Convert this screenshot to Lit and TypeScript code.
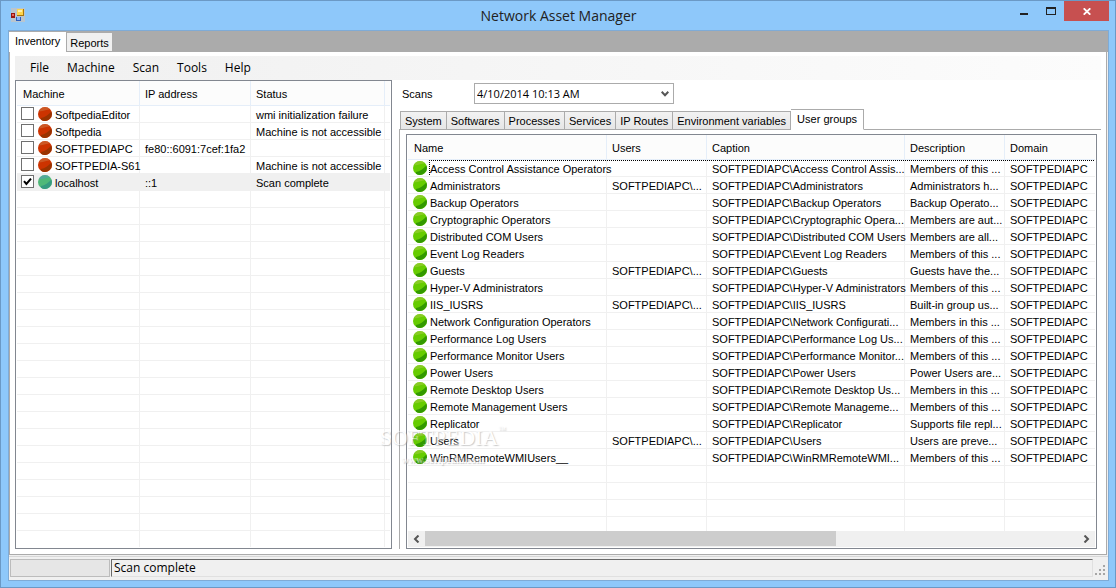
import { LitElement, html, css, svg } from "lit";
import { customElement, property } from "lit/decorators.js";
import { classMap } from "lit/directives/class-map.js";

interface Machine {
  name: string;
  ip: string;
  status: string;
  online?: boolean;
}

const MACHINES: Machine[] = [
  { name: "SoftpediaEditor", ip: "", status: "wmi initialization failure" },
  { name: "Softpedia", ip: "", status: "Machine is not accessible" },
  { name: "SOFTPEDIAPC", ip: "fe80::6091:7cef:1fa2", status: "" },
  { name: "SOFTPEDIA-S61", ip: "", status: "Machine is not accessible" },
  { name: "localhost", ip: "::1", status: "Scan complete", online: true },
];

const GROUPS: string[][] = [
  ["Access Control Assistance Operators", "", "Access Control Assis...", "Members of this ..."],
  ["Administrators", "SOFTPEDIAPC\\...", "Administrators", "Administrators h..."],
  ["Backup Operators", "", "Backup Operators", "Backup Operato..."],
  ["Cryptographic Operators", "", "Cryptographic Opera...", "Members are aut..."],
  ["Distributed COM Users", "", "Distributed COM Users", "Members are all..."],
  ["Event Log Readers", "", "Event Log Readers", "Members of this ..."],
  ["Guests", "SOFTPEDIAPC\\...", "Guests", "Guests have the..."],
  ["Hyper-V Administrators", "", "Hyper-V Administrators", "Members of this ..."],
  ["IIS_IUSRS", "SOFTPEDIAPC\\...", "IIS_IUSRS", "Built-in group us..."],
  ["Network Configuration Operators", "", "Network Configurati...", "Members in this ..."],
  ["Performance Log Users", "", "Performance Log Us...", "Members of this ..."],
  ["Performance Monitor Users", "", "Performance Monitor...", "Members of this ..."],
  ["Power Users", "", "Power Users", "Power Users are..."],
  ["Remote Desktop Users", "", "Remote Desktop Us...", "Members in this ..."],
  ["Remote Management Users", "", "Remote Manageme...", "Members of this ..."],
  ["Replicator", "", "Replicator", "Supports file repl..."],
  ["Users", "SOFTPEDIAPC\\...", "Users", "Users are preve..."],
  ["WinRMRemoteWMIUsers__", "", "WinRMRemoteWMI...", "Members of this ..."],
];

const tableStyles = css`
  :host {
    display: flex;
    min-height: 0;
    min-width: 0;
    overflow: hidden;
    background: #fff;
    border: 1px solid #828790;
    box-sizing: border-box;
    padding: 0 1px 1px;
  }
  table {
    width: 100%;
    height: 100%;
    border-collapse: separate;
    border-spacing: 0;
    table-layout: fixed;
  }
  th,
  td {
    padding: 0 0 0 5px;
    text-align: left;
    font-weight: normal;
    white-space: nowrap;
    box-sizing: border-box;
    border-right: 1px solid #f0f0f0;
    border-bottom: 1px solid #f0f0f0;
  }
  th {
    height: 25px;
    padding-top: 2px;
    background: #fcfcfc;
    border-color: #e5eef9;
  }
  th:first-child {
    padding-left: 6px;
  }
  th:last-child,
  td:last-child {
    border-right: 0;
  }
  .row,
  .row td {
    height: 17px;
    line-height: 14px;
  }
  .row td {
    padding-top: 2px;
  }
  .row td:first-child {
    padding-top: 0;
  }
  .filler td {
    border-bottom: 0;
    background: repeating-linear-gradient(#fff 0 16px, #f0f0f0 16px 17px);
  }
  .name {
    display: flex;
    align-items: center;
    height: 16px;
  }
`;

@customElement("status-orb")
class StatusOrb extends LitElement {
  @property() kind = "green";
  static styles = css`
    :host {
      display: block;
      flex: none;
      width: 14px;
      height: 14px;
    }
    svg {
      display: block;
    }
  `;
  render() {
    const tones: Record<string, string[]> = {
      green: ["#66cc00", "#339900", "#99cc33"],
      red: ["#cc3300", "#993300", "#cc6633"],
      teal: ["#4fb878", "#369b80", "#57a3a8"],
    };
    const [base, dark, rim] = tones[this.kind];
    return html`<svg width="14" height="14" viewBox="0 0 14 14" aria-hidden="true">
      ${svg`<circle cx="7" cy="7" r="7" fill=${base}/>
      <path d="M13.400 4.400 A7 7 0 0 1 3 12.700 L3 11 C7 10.500 10.500 7.500 13.400 4.400Z" fill=${dark}/>
      <path d="M2 2.200 A7 7 0 0 1 12 2.200 C9 2.800 6 3.600 1.200 4.500Z" fill=${rim} opacity=".7"/>`}
    </svg>`;
  }
}

@customElement("machine-list")
class MachineList extends LitElement {
  static styles = [
    tableStyles,
    css`
      .c-machine {
        width: 123px;
      }
      .c-ip {
        width: 111px;
      }
      .c-status {
        width: 134px;
      }
      .row td:first-child {
        padding-left: 4px;
      }
      .selected td {
        background: #f0f0f0;
      }
      input {
        appearance: none;
        flex: none;
        width: 13px;
        height: 13px;
        margin: 0 4px 2px 0;
        border: 1px solid #707070;
        background: #fff;
      }
      input:checked {
        background: #fff
          url("data:image/svg+xml,%3Csvg xmlns='http://www.w3.org/2000/svg' viewBox='0 0 11 11'%3E%3Cpath d='M2 5.2 4.4 8 9 2.6' fill='none' stroke='%23000' stroke-width='2'/%3E%3C/svg%3E");
      }
      label {
        margin-left: 3px;
        padding-top: 2px;
      }
    `,
  ];
  render() {
    return html`<table>
      <colgroup>
        <col class="c-machine" /><col class="c-ip" /><col class="c-status" /><col />
      </colgroup>
      <thead>
        <tr><th>Machine</th><th>IP address</th><th>Status</th><th></th></tr>
      </thead>
      <tbody>
        ${MACHINES.map(
          (m, i) => html`<tr class=${classMap({ row: true, selected: !!m.online })}>
            <td>
              <div class="name">
                <input type="checkbox" id="m${i}" .checked=${!!m.online} />
                <status-orb kind=${m.online ? "teal" : "red"}></status-orb>
                <label for="m${i}">${m.name}</label>
              </div>
            </td>
            <td>${m.ip}</td>
            <td>${m.status}</td>
            <td></td>
          </tr>`
        )}
        <tr class="filler" aria-hidden="true"><td></td><td></td><td></td><td></td></tr>
      </tbody>
    </table>`;
  }
}

@customElement("group-list")
class GroupList extends LitElement {
  static styles = [
    tableStyles,
    css`
      :host {
        flex-direction: column;
      }
      .view {
        flex: 1;
        min-height: 0;
        overflow: hidden;
      }
      .c-name {
        width: 199px;
      }
      .c-small {
        width: 100px;
      }
      .c-caption {
        width: 198px;
      }
      .row td:first-child {
        padding-left: 5px;
      }
      .text {
        box-sizing: border-box;
        margin-left: 2px;
        flex: 1;
        min-width: 0;
        height: 16px;
        padding: 2px 0 0 1px;
      }
      .focused td {
        background: repeating-linear-gradient(90deg, #000 0 1px, #fff 1px 2px) top / 100% 1px no-repeat;
      }
      .focused td:first-child {
        background-position: 21px 0;
      }
      .focused .text {
        background: repeating-linear-gradient(#000 0 1px, #fff 1px 2px) left / 1px 100% no-repeat;
      }
      .scroll {
        display: flex;
        justify-content: space-between;
        height: 16px;
        flex: none;
        background: #f0f0f0;
      }
      .scroll button {
        border: 0;
        padding: 0;
        width: 17px;
        background: none;
        display: grid;
        place-items: center;
      }
      .track {
        flex: 1;
      }
      .thumb {
        width: 63%;
        height: 15px;
        background: #cdcdcd;
      }
    `,
  ];
  render() {
    return html`<div class="view">
        <table>
          <colgroup>
            <col class="c-name" /><col class="c-small" /><col class="c-caption" /><col class="c-small" /><col />
          </colgroup>
          <thead>
            <tr><th>Name</th><th>Users</th><th>Caption</th><th>Description</th><th>Domain</th></tr>
          </thead>
          <tbody>
            ${GROUPS.map(
              ([name, users, caption, description], i) => html`<tr class=${classMap({ row: true, focused: i === 0 })}>
                <td><div class="name"><status-orb></status-orb><span class="text">${name}</span></div></td>
                <td>${users}</td>
                <td>SOFTPEDIAPC\\${caption}</td>
                <td>${description}</td>
                <td>SOFTPEDIAPC</td>
              </tr>`
            )}
            <tr class="filler" aria-hidden="true"><td></td><td></td><td></td><td></td><td></td></tr>
          </tbody>
        </table>
      </div>
      <div class="scroll">
        <button aria-label="Scroll left">
          <svg width="7" height="8" viewBox="0 0 7 8"><path d="M5.5 0.5 2 4l3.500 3.500" fill="none" stroke="#555" stroke-width="2" /></svg>
        </button>
        <div class="track"><div class="thumb"></div></div>
        <button aria-label="Scroll right">
          <svg width="7" height="8" viewBox="0 0 7 8"><path d="M1.500 0.500 5 4 1.500 7.500" fill="none" stroke="#555" stroke-width="2" /></svg>
        </button>
      </div>`;
  }
}

@customElement("app-root")
class AppRoot extends LitElement {
  static styles = css`
    :host {
      display: flex;
      flex-direction: column;
      position: relative;
      box-sizing: border-box;
      height: 100vh;
      border: 1px solid #6b99c5;
      padding: 0 6px 6px 7px;
      background: #8ec8fa;
      color: #000;
      font: 11px "Liberation Sans", sans-serif;
    }
    * {
      box-sizing: border-box;
    }
    button {
      font: inherit;
      color: inherit;
      border: 0;
      margin: 0;
      padding: 0;
      background: none;
    }
    svg {
      display: block;
    }
    .title {
      display: grid;
      grid-template-columns: 1fr auto 1fr;
      height: 29px;
      flex: none;
    }
    .title h1 {
      margin: 0;
      font: 14px/30px "Open Sans", sans-serif;
      color: #222;
    }
    .logo {
      margin: 7px 0 0 3px;
    }
    .controls {
      display: flex;
      justify-content: flex-end;
      align-items: flex-start;
    }
    .controls button {
      height: 20px;
      width: 27px;
      display: grid;
      place-items: center;
    }
    .controls .close {
      width: 45px;
      background: #c75050;
    }
    .client {
      flex: 1;
      min-height: 0;
      display: flex;
      flex-direction: column;
      border: 1px solid #7fabd6;
      background: #f0f0f0;
    }
    .tabs {
      display: flex;
      align-items: flex-end;
      height: 21px;
      flex: none;
    }
    .strip {
      background: #ababab;
    }
    .strip button {
      height: 18px;
      margin-bottom: 1px;
      padding: 1px 3px 0;
      background: #f0f0f0;
    }
    .strip .on {
      height: 20px;
      margin: 0;
      padding: 0 6px 2px;
      background: #fff;
      border-right: 1px solid #ababab;
    }
    .page {
      flex: 1;
      min-height: 0;
      display: flex;
      flex-direction: column;
      background: #fff;
      border: 1px solid #ababab;
      border-top: 0;
      margin-right: 1px;
      padding: 4px 5px 5px;
    }
    nav {
      display: flex;
      height: 24px;
      flex: none;
      padding-left: 6px;
      background: linear-gradient(90deg, #f0f0f0, #fcfcfc);
      font: 12px "Open Sans", sans-serif;
    }
    nav button {
      padding: 0 9px 2px;
    }
    .split {
      flex: 1;
      min-height: 0;
      display: flex;
    }
    machine-list {
      width: 377px;
      flex: none;
    }
    .details {
      flex: 1;
      min-width: 0;
      margin-left: 7px;
      display: flex;
      flex-direction: column;
    }
    .scans {
      display: flex;
      align-items: center;
      height: 21px;
      margin: 3px 0 5px 3px;
      flex: none;
    }
    .scans label {
      width: 72px;
    }
    select {
      appearance: none;
      width: 200px;
      height: 21px;
      padding: 0 2px 1px;
      border: 1px solid #ababab;
      border-radius: 0;
      color: #000;
      font: 11px "Open Sans", sans-serif;
      background: #fff
        url("data:image/svg+xml,%3Csvg xmlns='http://www.w3.org/2000/svg' width='8' height='6'%3E%3Cpath d='M.7.8 4 4.200 7.300.8' fill='none' stroke='%23555' stroke-width='2'/%3E%3C/svg%3E")
        right 4px center no-repeat;
    }
    .inner {
      padding-left: 1px;
      margin-bottom: -1px;
      position: relative;
    }
    .inner button {
      height: 19px;
      padding: 0 4px;
      border: 1px solid #ababab;
      border-left-width: 0;
      background: linear-gradient(#f2f2f2, #e6e6e6);
      white-space: nowrap;
    }
    .inner button:first-child {
      border-left-width: 1px;
    }
    .inner .on {
      height: 21px;
      padding: 0 6px 2px;
      background: #fff;
      border-bottom-color: #fff;
    }
    .pane {
      flex: 1;
      min-height: 0;
      display: flex;
      border: solid #ababab;
      border-width: 1px 0 0 1px;
      padding: 4px 4px 0 6px;
    }
    group-list {
      flex: 1;
    }
    footer {
      display: flex;
      gap: 1px;
      height: 24px;
      flex: none;
      margin-top: 1px;
      padding: 2px 1px 3px;
      border-top: 1px solid #d7d7d7;
      font: 12px/15px "Open Sans", sans-serif;
    }
    .progress {
      width: 100px;
      border: 1px solid #bcbcbc;
      background: #e6e6e6;
    }
    .message {
      flex: 1;
      padding-left: 2px;
      border: 1px solid #e0e0e0;
      border-top-color: #696969;
      border-left-color: #696969;
    }
    .grip {
      align-self: flex-end;
      margin-left: 1px;
    }
    .watermark {
      position: absolute;
      left: 34%;
      top: 425px;
      color: #fff;
      opacity: 0.5;
      text-shadow: 1px 1px 1px #999;
      text-align: center;
      font: 22px/24px "Liberation Serif", serif;
      pointer-events: none;
    }
    .watermark sup {
      font-size: 8px;
      vertical-align: top;
      line-height: 8px;
    }
    .watermark small {
      display: block;
      font: bold 10px/20px "Liberation Serif", serif;
    }
  `;

  render() {
    const tabs = ["System", "Softwares", "Processes", "Services", "IP Routes", "Environment variables", "User groups"];
    return html`
      <header class="title">
        <svg class="logo" width="14" height="14" viewBox="0 0 14 14" aria-hidden="true">
          <rect x="0" y="0" width="14" height="14" fill="#c4c4c4" opacity=".8" />
          <rect x="6" y="1" width="7" height="7" fill="#a9760b" />
          <rect x="6" y="1" width="6" height="6" fill="#ffd54a" />
          <rect x="7" y="2" width="4" height="2" fill="#fff0a8" />
          <rect x="0" y="5" width="4" height="5" fill="#99150f" />
          <rect x="1" y="6" width="2" height="2" fill="#e8685c" />
          <rect x="5" y="9" width="5" height="4" fill="#2c5fc0" />
          <rect x="6" y="9" width="3" height="3" fill="#8fb6f6" />
        </svg>
        <h1>Network Asset Manager</h1>
        <div class="controls">
          <button aria-label="Minimize"><svg width="8" height="10"><rect y="7" width="8" height="2" fill="#222" /></svg></button>
          <button aria-label="Maximize">
            <svg width="10" height="8"><path d="M0 0h10v8H0zM1 2v5h8V2z" fill="#222" fill-rule="evenodd" /></svg>
          </button>
          <button class="close" aria-label="Close">
            <svg width="8" height="7" viewBox="0 0 8 7"><path d="M.7.3 7.300 6.700M7.300.3.7 6.700" stroke="#fff" stroke-width="1.800" /></svg>
          </button>
        </div>
      </header>
      <main class="client">
        <div class="tabs strip" role="tablist">
          <button class="on" role="tab" aria-selected="true">Inventory</button>
          <button role="tab" aria-selected="false">Reports</button>
        </div>
        <section class="page">
          <nav>${["File", "Machine", "Scan", "Tools", "Help"].map((t) => html`<button>${t}</button>`)}</nav>
          <div class="split">
            <machine-list></machine-list>
            <div class="details">
              <div class="scans">
                <label for="scan">Scans</label>
                <select id="scan"><option>4/10/2014 10:13 AM</option></select>
              </div>
              <div class="tabs inner" role="tablist">
                ${tabs.map((t, i) => html`<button role="tab" class=${classMap({ on: i === 6 })}>${t}</button>`)}
              </div>
              <div class="pane"><group-list></group-list></div>
            </div>
          </div>
        </section>
        <footer>
          <div class="progress"></div>
          <div class="message" role="status">Scan complete</div>
          <svg class="grip" width="12" height="12" fill="#a6a6a6" aria-hidden="true">
            <path d="M8 0h2v2H8zM4 4h2v2H4zM8 4h2v2H8zM0 8h2v2H0zM4 8h2v2H4zM8 8h2v2H8z" />
          </svg>
        </footer>
      </main>
      <div class="watermark">SOFTPEDIA<sup>™</sup><small>www.softpedia.com</small></div>
    `;
  }
}
